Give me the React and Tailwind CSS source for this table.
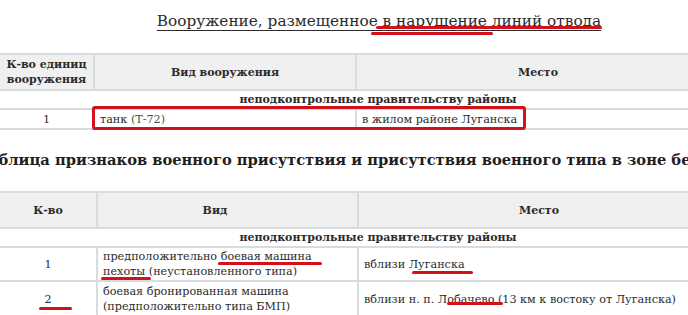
import React from 'react';

const cell = 'border-2 border-[#d8dcdc] px-[5px] align-middle';

function Mark({ className }) {
  return <div className={`absolute h-[3px] rounded-full bg-[#d3111d] ${className}`} />;
}

export default function App() {
  return (
    <div className="relative w-[688px] h-[315px] overflow-hidden bg-white text-[#2b2b2b] [font-family:DejaVu_Serif,Liberation_Serif,serif]">
      <div className="w-[758px] h-[53px] pt-[9px] text-center text-[15.3px] leading-[24px]">
        <span className="underline decoration-1 underline-offset-[4px]">
          Вооружение, размещенное в нарушение линий отвода
        </span>
      </div>

      <table className="w-[758px] border-collapse text-[11.2px] leading-[15px]">
        <colgroup>
          <col className="w-[94px]" />
          <col className="w-[262px]" />
          <col />
        </colgroup>
        <thead>
          <tr className="bg-[#f0f0f0] h-[36px]">
            <th className={`${cell} border-l-0 px-0 whitespace-nowrap text-[11px] font-bold`}>
              К-во единиц
              <br />
              вооружения
            </th>
            <th className={`${cell} text-[11px] font-bold`}>Вид вооружения</th>
            <th className={`${cell} pr-[42px] text-[11px] font-bold`}>Место</th>
          </tr>
        </thead>
        <tbody>
          <tr className="h-[19px]">
            <td colSpan={3} className={`${cell} border-l-0 text-center text-[11px] font-bold`}>
              неподконтрольные правительству районы
            </td>
          </tr>
          <tr className="h-[20px]">
            <td className={`${cell} border-l-0 text-center`}>1</td>
            <td className={cell}>
              танк <span className="text-[#345a4c]">(Т-72)</span>
            </td>
            <td className={cell}>в жилом районе Луганска</td>
          </tr>
        </tbody>
      </table>

      <div className="mt-[19px] -ml-[22px] whitespace-nowrap text-[14.7px] leading-[22px] font-bold text-[#1f1f1f]">
        Таблица признаков военного присутствия и присутствия военного типа в зоне безопасности
      </div>

      <table className="mt-[20px] w-[758px] border-collapse text-[11.2px] leading-[15px]">
        <colgroup>
          <col className="w-[97px]" />
          <col className="w-[261px]" />
          <col />
        </colgroup>
        <thead>
          <tr className="bg-[#f0f0f0] h-[36px]">
            <th className={`${cell} border-l-0 text-[11px] font-bold`}>К-во</th>
            <th className={`${cell} pr-[30px] text-[11px] font-bold`}>Вид</th>
            <th className={`${cell} pr-[42px] text-[11px] font-bold`}>Место</th>
          </tr>
        </thead>
        <tbody>
          <tr className="h-[19px]">
            <td colSpan={3} className={`${cell} border-l-0 text-center text-[11px] font-bold`}>
              неподконтрольные правительству районы
            </td>
          </tr>
          <tr className="h-[34px]">
            <td className={`${cell} border-l-0 text-center`}>1</td>
            <td className={cell}>
              предположительно боевая машина
              <br />
              пехоты (неустановленного типа)
            </td>
            <td className={cell}>вблизи Луганска</td>
          </tr>
          <tr className="h-[36px]">
            <td className={`${cell} border-l-0 text-center`}>2</td>
            <td className={cell}>
              боевая бронированная машина
              <br />
              (предположительно типа БМП)
            </td>
            <td className={cell}>вблизи н. п. Лобачево (13 км к востоку от Луганска)</td>
          </tr>
        </tbody>
      </table>

      {/* red annotations */}
      <Mark className="left-[376px] top-[26px] w-[226px]" />
      <Mark className="left-[371px] top-[32px] w-[122px]" />
      <div className="absolute left-[92px] top-[106px] w-[434px] h-[24px] rounded-[3px] border-[3px] border-[#d3111d]" />
      <Mark className="left-[218px] top-[262px] w-[104px]" />
      <Mark className="left-[101px] top-[277px] w-[50px]" />
      <Mark className="left-[412px] top-[271px] w-[61px]" />
      <Mark className="left-[39px] top-[307px] w-[33px]" />
      <Mark className="left-[447px] top-[302px] w-[56px]" />
    </div>
  );
}
